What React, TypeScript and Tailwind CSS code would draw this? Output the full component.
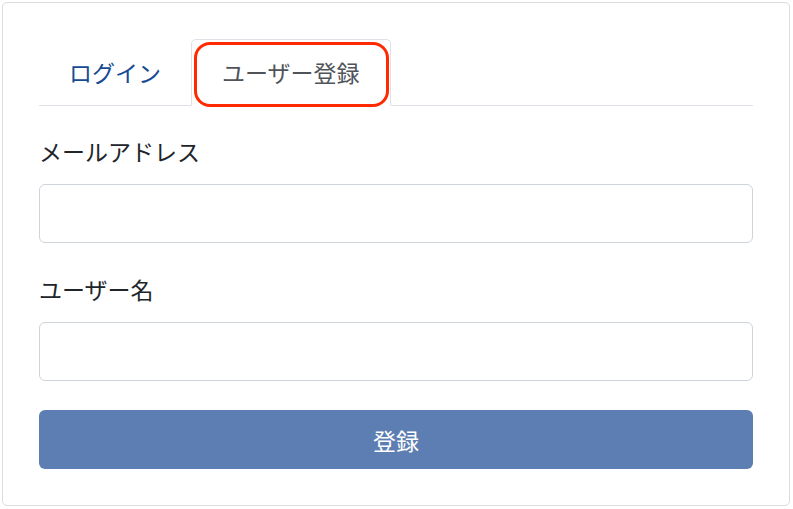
import React from "react";

const font = { fontFamily: '"Noto Sans CJK JP", "Noto Sans", sans-serif' };

const App = () => {
  return (
    <div className="w-[793px] h-[509px] bg-white p-[2px]" style={font}>
      <div className="w-[788px] h-[504px] border border-[#dcdcdc] rounded-[5px] px-[36px] pt-[36px]">
        {/* tabs */}
        <div className="flex border-b border-[#dee2e6] text-[23px] leading-[34px]">
          <div className="px-[29px] py-[15px] text-[#174a94] border border-transparent">
            ログイン
          </div>
          <div className="relative px-[30px] py-[15px] text-[#4f5459] bg-white border border-[#dee2e6] border-b-white rounded-t-[5px] -mb-px">
            ユーザー登録
            <div className="absolute left-[2px] right-[1px] top-[2px] bottom-[-2px] border-[3px] border-[#ff2a00] rounded-[16px]"></div>
          </div>
        </div>

        {/* form */}
        <div className="flex flex-col text-[23px] leading-[34px] text-[#212529]">
          <label className="mt-[28px]">メールアドレス</label>
          <input
            type="email"
            className="mt-[16px] h-[59px] w-full border border-[#ced4da] rounded-[6px] outline-none"
          />
          <label className="mt-[29px]">ユーザー名</label>
          <input
            type="text"
            className="mt-[16px] h-[59px] w-full border border-[#ced4da] rounded-[6px] outline-none"
          />
          <button className="mt-[29px] h-[59px] w-full rounded-[6px] bg-[#5c7eb2] text-white">
            登録
          </button>
        </div>
      </div>
    </div>
  );
};

export default App;
